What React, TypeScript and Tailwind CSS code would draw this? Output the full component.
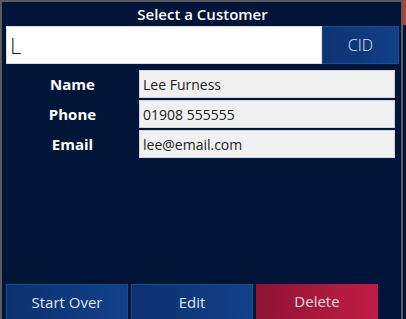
import React from 'react';

const font = { fontFamily: '"Open Sans", "Noto Sans", sans-serif' };

function Field({ label, value }: { label: string; value: string }) {
  return (
    <div className="flex items-center h-[28px]">
      <div className="w-[133px] text-center text-white font-bold text-[15px]">{label}</div>
      <div className="w-[256px] h-full bg-[#f0f0f0] border border-[#d4d4d4] flex items-center pl-[3px] text-[14px] text-[#222]">
        {value}
      </div>
    </div>
  );
}

const btn = 'w-[122px] flex justify-center pt-[6px] text-[15px]';

export default function App() {
  return (
    <div className="w-[406px] h-[319px] bg-[#001538] flex overflow-hidden" style={font}>
      <div className="w-[403px] h-[330px] border-2 border-b-0 border-[#5c5c5c] flex flex-col pl-[4px] pr-[2px]">
        <div className="h-[24px] flex items-center justify-center text-white text-[15px] font-semibold">
          Select a Customer
        </div>
        <div className="flex h-[38px]">
          <div className="flex-1 bg-white border border-[#dcdcdc] flex items-center pl-[3px] text-[22px] font-light text-[#1a1a1a]">
            L
          </div>
          <button className="w-[77px] bg-gradient-to-r from-[#0e3473] to-[#123f87] border border-[#1d4a90] text-[#dde6f5] text-[16px] font-light">
            CID
          </button>
        </div>
        <div className="flex flex-col gap-[2px] mt-[6px]">
          <Field label="Name" value="Lee Furness" />
          <Field label="Phone" value="01908 555555" />
          <Field label="Email" value="lee@email.com" />
        </div>
        <div className="flex-1" />
        <div className="flex gap-[3px] h-[46px]">
          <button className={`${btn} bg-gradient-to-r from-[#0c326e] to-[#134089] border border-[#1b4a91] text-[#dde6f5]`}>
            Start Over
          </button>
          <button className={`${btn} bg-gradient-to-r from-[#0c326e] to-[#134089] border border-[#1b4a91] text-[#dde6f5]`}>
            Edit
          </button>
          <button className={`${btn} bg-gradient-to-r from-[#8e1434] to-[#c21c45] text-[#f3dce2]`}>
            Delete
          </button>
        </div>
      </div>
      <div className="w-[3px] flex flex-col">
        <div className="h-[25px] bg-[#b8412a]" />
      </div>
    </div>
  );
}
